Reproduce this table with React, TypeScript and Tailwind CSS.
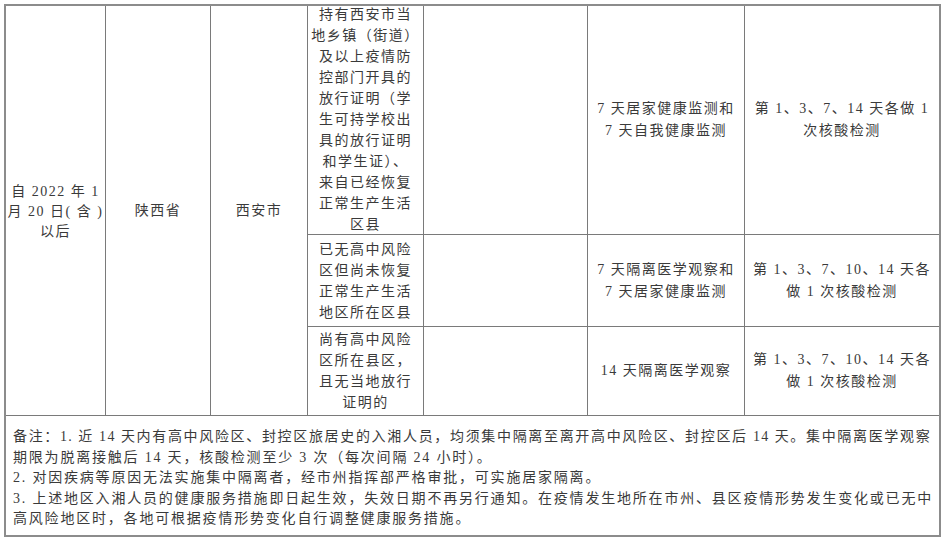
import React from "react";

const font = "font-['Liberation_Serif','Noto_Sans_CJK_SC',serif]";

function Lines({ lines, lh = "leading-[21px]" }: { lines: string[]; lh?: string }) {
  return (
    <div className={`flex flex-col items-center ${lh}`}>
      {lines.map((l, i) => (
        <div key={i} className="whitespace-nowrap">
          {l}
        </div>
      ))}
    </div>
  );
}

const cell = "border-r border-b border-[#7a7a7a] flex items-center justify-center";
const lastCell = "border-b border-[#7a7a7a] flex items-center justify-center";

export default function App() {
  return (
    <div className={`w-[942px] h-[542px] bg-white pt-[4px] pl-[4px] ${font} text-[14px] text-[#3a3a3a]`}>
      <div className="w-[937px] border-2 border-[#8c8c8c]">
        <div className="grid grid-cols-[100px_105px_97px_116px_164px_157px_194px] grid-rows-[229px_92px_89px] tracking-[1.5px]">
          <div className={`${cell} row-span-3 pt-[2px]`}>
            <Lines lines={["自 2022 年 1", "月 20 日( 含 )", "以后"]} lh="leading-[20px]" />
          </div>
          <div className={`${cell} row-span-3`}>陕西省</div>
          <div className={`${cell} row-span-3`}>西安市</div>

          <div className={`${cell} pb-[1px]`}>
            <Lines
              lines={[
                "持有西安市当",
                "地乡镇（街道）",
                "及以上疫情防",
                "控部门开具的",
                "放行证明（学",
                "生可持学校出",
                "具的放行证明",
                "和学生证）、",
                "来自已经恢复",
                "正常生产生活",
                "区县",
              ]}
            />
          </div>
          <div className={cell}></div>
          <div className={cell}>
            <Lines lines={["7 天居家健康监测和", "7 天自我健康监测"]} lh="leading-[22px]" />
          </div>
          <div className={lastCell}>
            <Lines lines={["第 1、3、7、14 天各做 1", "次核酸检测"]} lh="leading-[22px]" />
          </div>

          <div className={cell}>
            <Lines lines={["已无高中风险", "区但尚未恢复", "正常生产生活", "地区所在区县"]} />
          </div>
          <div className={cell}></div>
          <div className={cell}>
            <Lines lines={["7 天隔离医学观察和", "7 天居家健康监测"]} lh="leading-[22px]" />
          </div>
          <div className={lastCell}>
            <Lines lines={["第 1、3、7、10、14 天各", "做 1 次核酸检测"]} lh="leading-[22px]" />
          </div>

          <div className={cell}>
            <Lines lines={["尚有高中风险", "区所在县区，", "且无当地放行", "证明的"]} />
          </div>
          <div className={cell}></div>
          <div className={cell}>
            <Lines lines={["14 天隔离医学观察"]} lh="leading-[22px]" />
          </div>
          <div className={lastCell}>
            <Lines lines={["第 1、3、7、10、14 天各", "做 1 次核酸检测"]} lh="leading-[22px]" />
          </div>
        </div>
        <div className="h-[119px] pl-[7px] pr-[8px] pt-[11px] leading-[20.6px] tracking-[1.8px]">
          <div className="whitespace-nowrap tracking-[1.3px] [text-align-last:justify]">
            备注：1. 近 14 天内有高中风险区、封控区旅居史的入湘人员，均须集中隔离至离开高中风险区、封控区后 14 天。集中隔离医学观察
          </div>
          <div className="whitespace-nowrap">期限为脱离接触后 14 天，核酸检测至少 3 次（每次间隔 24 小时）。</div>
          <div className="whitespace-nowrap">2. 对因疾病等原因无法实施集中隔离者，经市州指挥部严格审批，可实施居家隔离。</div>
          <div className="whitespace-nowrap [text-align-last:justify]">
            3. 上述地区入湘人员的健康服务措施即日起生效，失效日期不再另行通知。在疫情发生地所在市州、县区疫情形势发生变化或已无中
          </div>
          <div className="whitespace-nowrap">高风险地区时，各地可根据疫情形势变化自行调整健康服务措施。</div>
        </div>
      </div>
    </div>
  );
}
